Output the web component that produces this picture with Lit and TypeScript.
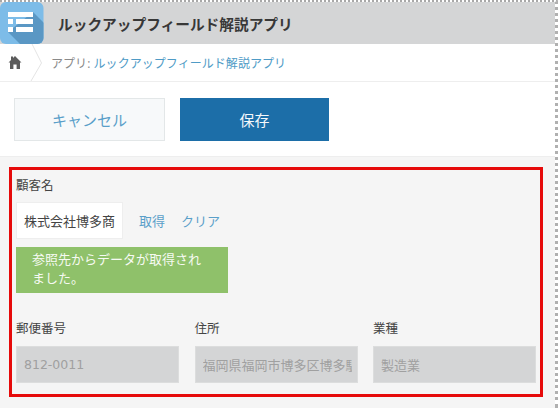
import { LitElement, html, css } from "lit";
import { customElement } from "lit/decorators.js";

@customElement("app-root")
export class AppRoot extends LitElement {
  static styles = css`
    :host {
      display: block;
      width: 560px;
      height: 408px;
      overflow: hidden;
      background: #fff;
      font-family: "Open Sans", "Noto Sans CJK JP", sans-serif;
      color: #333;
    }
    .page {
      width: 558px;
      height: 408px;
      box-sizing: border-box;
      border-top: 2px dotted #a8a8a8;
      border-right: 3px dotted #b0b0b0;
      display: flex;
      flex-direction: column;
      overflow: hidden;
    }
    .header {
      height: 42px;
      flex: none;
      background: #d4d5d6;
      display: flex;
      align-items: center;
      gap: 14px;
    }
    .logo {
      width: 44px;
      height: 42px;
      flex: none;
      display: block;
    }
    .title {
      font-size: 14.7px;
      font-weight: 700;
      color: #383838;
    }
    .crumbs {
      height: 38px;
      flex: none;
      box-sizing: border-box;
      border-bottom: 1px solid #eeeeee;
      display: flex;
      align-items: center;
    }
    .home {
      width: 44px;
      height: 37px;
      flex: none;
      display: block;
    }
    .crumb-text {
      margin-left: 7px;
      font-size: 12px;
      letter-spacing: 0.05px;
      color: #8a8a8a;
    }
    .crumb-text a {
      color: #4f9bc6;
    }
    .actions {
      height: 74px;
      flex: none;
      box-sizing: border-box;
      padding: 16px 0 0 14px;
      display: flex;
      align-items: flex-start;
      gap: 15px;
    }
    .btn {
      height: 43px;
      box-sizing: border-box;
      display: flex;
      align-items: center;
      justify-content: center;
      font-size: 15px;
    }
    .cancel {
      width: 151px;
      background: #f7f9fa;
      border: 1px solid #e3e7e8;
      color: #5a9fc9;
    }
    .save {
      width: 149px;
      background: #1c6ea8;
      color: #f4f8fb;
    }
    .form {
      flex: 1;
      background: #f5f5f5;
      border-top: 1px solid #eeeeee;
      padding: 10px 12px 0 9px;
      min-height: 0;
    }
    .box {
      box-sizing: border-box;
      height: 230px;
      width: 534px;
      border: 3px solid #e60a0a;
      padding: 7px 4px 0 4px;
    }
    .label {
      font-size: 12.5px;
      line-height: 18px;
      color: #444;
    }
    .lookup {
      margin-top: 7px;
      display: flex;
      align-items: center;
    }
    .value {
      width: 107px;
      height: 37px;
      box-sizing: border-box;
      background: #fff;
      border: 1px solid #eeeeee;
      display: flex;
      align-items: center;
      justify-content: center;
      font-size: 13px;
      white-space: nowrap;
      overflow: hidden;
      color: #444;
    }
    .link {
      font-size: 13px;
      color: #5a9fc9;
    }
    .get {
      margin-left: 16px;
    }
    .clear {
      margin-left: 16px;
    }
    .notice {
      margin-top: 8px;
      width: 212px;
      height: 46px;
      box-sizing: border-box;
      background: #8fc16a;
      color: #f6faf2;
      font-size: 13px;
      line-height: 19px;
      padding: 3px 16px 0 16px;
    }
    .fields {
      margin-top: 27px;
      display: grid;
      grid-template-columns: repeat(3, 163px);
      column-gap: 15.5px;
    }
    .input {
      margin-top: 8px;
      height: 37px;
      box-sizing: border-box;
      background: #d4d5d6;
      border: 1px solid #dcdddd;
      display: flex;
      align-items: center;
      padding: 0 5px 0 7px;
      font-size: 13px;
      color: #a0a0a0;
    }
    .clip {
      display: block;
      white-space: nowrap;
      overflow: hidden;
    }
    .num {
      font-family: "DejaVu Sans", sans-serif;
      font-size: 12.5px;
    }
  `;

  render() {
    return html`
      <div class="page">
        <div class="header">
          <svg class="logo" viewBox="0 0 44 42">
            <defs>
              <clipPath id="c"><rect x="0" y="0" width="43.5" height="42" rx="6" /></clipPath>
            </defs>
            <g clip-path="url(#c)">
              <rect width="44" height="42" fill="#7dbce8" />
              <path d="M33 10 L44 21 V42 H20 L8 30 Z" fill="#5a97c4" />
              <rect x="8" y="10" width="25" height="5" fill="#fff" />
              <rect x="8" y="17" width="5" height="5" fill="#fff" />
              <rect x="16" y="17" width="17" height="5" fill="#fff" />
              <rect x="8" y="25" width="5" height="5" fill="#fff" />
              <rect x="16" y="25" width="17" height="5" fill="#fff" />
            </g>
          </svg>
          <span class="title">ルックアップフィールド解説アプリ</span>
        </div>
        <div class="crumbs">
          <svg class="home" viewBox="0 0 44 37">
            <path d="M15 12 L21.5 18.5 H20 V25 H16.6 V20.5 H13.4 V25 H10 V18.5 H8.5 L11 16 V12.5 H13 V14 Z" fill="#5c5c5c" />
            <path d="M32 0 L41.5 19 L31 37" fill="none" stroke="#e4e4e4" />
          </svg>
          <span class="crumb-text">アプリ: <a>ルックアップフィールド解説アプリ</a></span>
        </div>
        <div class="actions">
          <div class="btn cancel">キャンセル</div>
          <div class="btn save">保存</div>
        </div>
        <div class="form">
          <div class="box">
            <div class="label">顧客名</div>
            <div class="lookup">
              <div class="value">株式会社博多商</div>
              <span class="link get">取得</span>
              <span class="link clear">クリア</span>
            </div>
            <div class="notice">参照先からデータが取得されました。</div>
            <div class="fields">
              <div>
                <div class="label">郵便番号</div>
                <div class="input"><span class="clip num">812-0011</span></div>
              </div>
              <div>
                <div class="label">住所</div>
                <div class="input"><span class="clip">福岡県福岡市博多区博多駅</span></div>
              </div>
              <div>
                <div class="label">業種</div>
                <div class="input"><span class="clip">製造業</span></div>
              </div>
            </div>
          </div>
        </div>
      </div>
    `;
  }
}
